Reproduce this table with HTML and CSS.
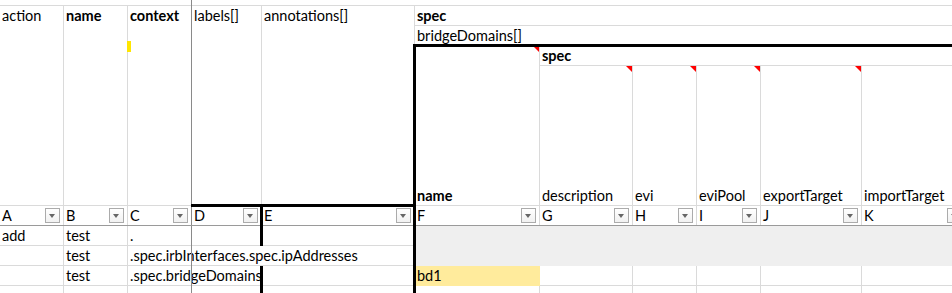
FILE: index.html
```html
<!DOCTYPE html>
<html lang="en">
<head>
<meta charset="utf-8">
<title>Sheet</title>
<link rel="stylesheet" href="styles.css">
</head>
<body>
<div class="sheet">
  <div class="c cAll r0"></div>

  <div class="c cA rHead top">action</div>
  <div class="c cB rHead top b">name</div>
  <div class="c cC rHead top b">context<span class="edit-mark"></span></div>
  <div class="c cD rHead top">labels[]</div>
  <div class="c cE rHead top">annotations[]</div>

  <div class="c cFK r1 b">spec</div>
  <div class="c cFK r2">bridgeDomains[]</div>

  <div class="c cF rName b note">name</div>
  <div class="c cGK r3 b">spec</div>
  <div class="c cG r4 note">description</div>
  <div class="c cH r4 note">evi</div>
  <div class="c cI r4 note">eviPool</div>
  <div class="c cJ r4 note">exportTarget</div>
  <div class="c cK r4">importTarget</div>

  <div class="c cA rF fc">A<span class="fbtn"></span></div>
  <div class="c cB rF fc">B<span class="fbtn"></span></div>
  <div class="c cC rF fc">C<span class="fbtn"></span></div>
  <div class="c cD rF fc">D<span class="fbtn"></span></div>
  <div class="c cE rF fc">E<span class="fbtn"></span></div>
  <div class="c cF rF fc">F<span class="fbtn"></span></div>
  <div class="c cG rF fc">G<span class="fbtn"></span></div>
  <div class="c cH rF fc">H<span class="fbtn"></span></div>
  <div class="c cI rF fc">I<span class="fbtn"></span></div>
  <div class="c cJ rF fc">J<span class="fbtn"></span></div>
  <div class="c cK rF fc">K<span class="fbtn"></span></div>

  <div class="c cA d1">add</div>
  <div class="c cB d1">test</div>
  <div class="c cC d1">.</div>
  <div class="c cD d1"></div>
  <div class="c cE d1"></div>
  <div class="c cFK grey-block"></div>

  <div class="c cA d2"></div>
  <div class="c cB d2">test</div>
  <div class="c cCE d2">.spec.irbInterfaces.spec.ipAddresses</div>

  <div class="c cA d3"></div>
  <div class="c cB d3">test</div>
  <div class="c cCD d3">.spec.bridgeDomains</div>
  <div class="c cE d3"></div>
  <div class="c cF d3 hl">bd1</div>
  <div class="c cG d3"></div>
  <div class="c cH d3"></div>
  <div class="c cI d3"></div>
  <div class="c cJ d3"></div>
  <div class="c cK d3"></div>

  <div class="c cA d4"></div>
  <div class="c cB d4"></div>
  <div class="c cC d4"></div>
  <div class="c cD d4"></div>
  <div class="c cE d4"></div>
  <div class="c cF d4"></div>
  <div class="c cG d4"></div>
  <div class="c cH d4"></div>
  <div class="c cI d4"></div>
  <div class="c cJ d4"></div>
  <div class="c cK d4"></div>

  <div class="freeze-v"></div>
  <div class="freeze-h"></div>
  <div class="range-f"></div>
  <div class="range-de"></div>
  <div class="range-d range-d-a"></div>
  <div class="range-d range-d-b"></div>
</div>
</body>
</html>
```
FILE: styles.css
```css
html, body {
  margin: 0;
  padding: 0;
  overflow: hidden;
  background: #ffffff;
}

.sheet {
  display: grid;
  grid-template-columns: 64px 64px 64px 70px 153px 125px 93px 64px 64px 101px 104px;
  grid-template-rows: 6px 20px 20px 20px 140px 20px 20px 20px 20px 20px;
  font-family: Lato, "Liberation Sans", sans-serif;
  font-size: 14.5px;
  color: #000;
}

.c {
  box-sizing: border-box;
  border-right: 1px solid #dadada;
  border-bottom: 1px solid #dadada;
  padding: 0 2px;
  display: flex;
  align-items: flex-end;
  line-height: 19px;
  white-space: nowrap;
  position: relative;
  min-width: 0;
}

.top { align-items: flex-start; }
.b { font-weight: 700; }

/* columns */
.cAll { grid-column: 1 / -1; border-right: 0; }
.cA { grid-column: 1; }
.cB { grid-column: 2; }
.cC { grid-column: 3; }
.cD { grid-column: 4; }
.cE { grid-column: 5; }
.cF { grid-column: 6; }
.cG { grid-column: 7; }
.cH { grid-column: 8; }
.cI { grid-column: 9; }
.cJ { grid-column: 10; }
.cK { grid-column: 11; }
.cFK { grid-column: 6 / -1; }
.cGK { grid-column: 7 / -1; }
.cCE { grid-column: 3 / 6; }
.cCD { grid-column: 3 / 5; }

/* rows */
.r0 { grid-row: 1; }
.rHead { grid-row: 2 / 6; }
.r1 { grid-row: 2; }
.r2 { grid-row: 3; }
.r3 { grid-row: 4; }
.r4 { grid-row: 5; }
.rName { grid-row: 4 / 6; }
.rF { grid-row: 6; }
.d1 { grid-row: 7; }
.d2 { grid-row: 8; }
.d3 { grid-row: 9; }
.d4 { grid-row: 10; }

.grey-block {
  grid-row: 7 / 9;
  background: #efefef;
  border-color: #efefef;
}

.hl {
  background: #ffeb9c;
  border-color: #ffeb9c;
}

/* filter row */
.fc {
  justify-content: space-between;
  align-items: center;
  padding-right: 3px;
}

.fbtn {
  box-sizing: border-box;
  width: 15px;
  height: 15px;
  border: 1px solid #ababab;
  background: linear-gradient(#ffffff, #f1f1f1);
  position: relative;
  flex: none;
}

.fbtn::after {
  content: "";
  position: absolute;
  left: 3px;
  top: 5px;
  width: 0;
  height: 0;
  border-left: 3.5px solid transparent;
  border-right: 3.5px solid transparent;
  border-top: 4px solid #666666;
}

/* comment indicator */
.note::after {
  content: "";
  position: absolute;
  top: 0;
  right: 0;
  width: 6px;
  height: 6px;
  background: #ff0000;
  clip-path: polygon(0 0, 100% 0, 100% 100%);
}

/* active-cell edit marker */
.edit-mark {
  position: absolute;
  left: -1px;
  top: 35px;
  width: 4px;
  height: 11px;
  background: #ffe600;
}

/* freeze panes lines */
.freeze-v {
  grid-column: 3;
  grid-row: 1 / -1;
  border-right: 1px solid #8a8a8a;
  z-index: 2;
  pointer-events: none;
}

.freeze-h {
  grid-column: 1 / -1;
  grid-row: 6;
  border-bottom: 1px solid #9a9a9a;
  z-index: 2;
  pointer-events: none;
}

/* thick range borders */
.range-f {
  grid-column: 6 / -1;
  grid-row: 4 / -1;
  border-top: 3px solid #000;
  border-left: 3px solid #000;
  margin: -2px 0 0 -2px;
  z-index: 3;
  pointer-events: none;
}

.range-de {
  grid-column: 4 / 6;
  grid-row: 6;
  border-top: 3px solid #000;
  margin: -2px 0 0 -1px;
  z-index: 3;
  pointer-events: none;
}

.range-d {
  grid-column: 4;
  border-right: 3px solid #000;
  margin-right: -1px;
  z-index: 3;
  pointer-events: none;
}

.range-d-a { grid-row: 6 / 8; margin-top: -2px; }
.range-d-b { grid-row: 9 / -1; }
```
